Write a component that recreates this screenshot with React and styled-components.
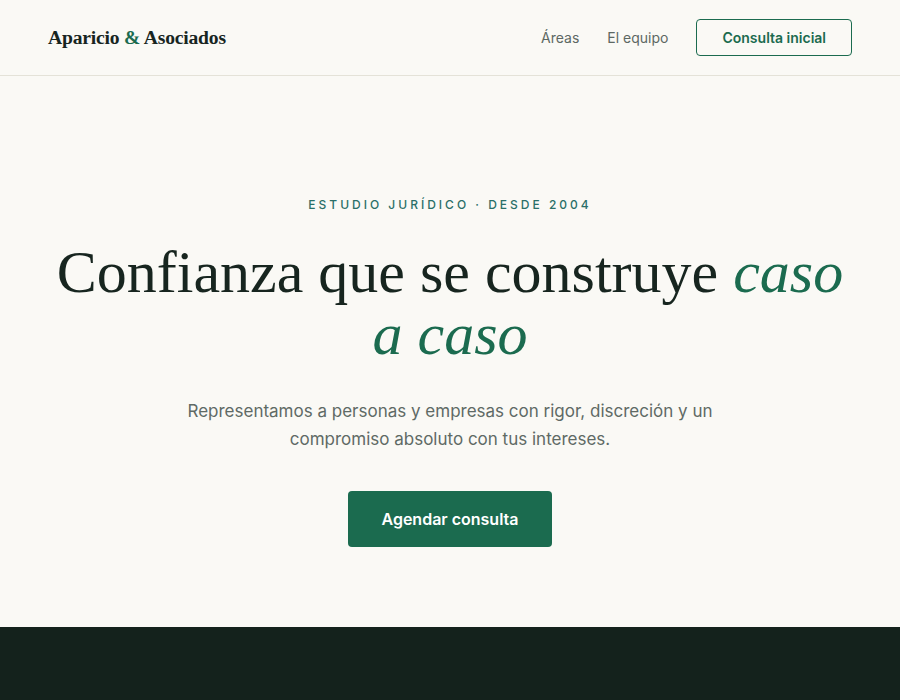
import React from 'react';
import styled, { createGlobalStyle } from 'styled-components';

const GlobalStyle = createGlobalStyle`
  * { box-sizing: border-box; }
  body {
    margin: 0;
    background: #faf9f5;
    font-family: Inter, "Noto Sans", sans-serif;
    color: #16241e;
  }
`;

const Header = styled.header`
  height: 76px;
  padding: 0 48px;
  display: flex;
  align-items: center;
  justify-content: space-between;
  border-bottom: 1px solid #e4e2d8;
  background: #faf9f5;
`;

const Logo = styled.div`
  font-family: "Liberation Serif", "DejaVu Serif", serif;
  font-weight: 700;
  font-size: 19.6px;
  color: #17251f;
  letter-spacing: -0.2px;

  span {
    color: #1b6b4f;
  }
`;

const Nav = styled.nav`
  display: flex;
  align-items: center;
  gap: 28px;
`;

const NavLink = styled.a`
  font-size: 14px;
  color: #5d6863;
  text-decoration: none;
`;

const OutlineButton = styled.a`
  display: inline-flex;
  align-items: center;
  justify-content: center;
  height: 37px;
  padding: 0 25px;
  border: 1px solid #1b6b4f;
  border-radius: 4px;
  color: #1b6b4f;
  font-size: 14px;
  font-weight: 600;
  text-decoration: none;
`;

const Hero = styled.section`
  padding: 121px 48px 80px;
  display: flex;
  flex-direction: column;
  align-items: center;
  text-align: center;
`;

const Eyebrow = styled.p`
  margin: 0;
  font-size: 12px;
  line-height: 16px;
  letter-spacing: 3px;
  color: #2a6f68;
  font-weight: 500;
`;

const Title = styled.h1`
  margin: 28px 0 0;
  max-width: 804px;
  font-family: "Liberation Serif", "DejaVu Serif", serif;
  font-weight: 400;
  font-size: 60px;
  line-height: 62px;
  color: #17251f;

  em {
    color: #1b6b4f;
    font-style: italic;
  }
`;

const Lead = styled.p`
  margin: 32px 0 0;
  max-width: 560px;
  font-size: 17px;
  line-height: 28px;
  color: #5f6a65;
`;

const PrimaryButton = styled.a`
  margin-top: 38px;
  display: inline-flex;
  align-items: center;
  justify-content: center;
  width: 204px;
  height: 56px;
  background: #1b6b4f;
  border-radius: 4px;
  color: #fff;
  font-size: 16px;
  font-weight: 600;
  text-decoration: none;
`;

const Stats = styled.section`
  background: #14221c;
  padding: 64px 48px;
`;

const StatGrid = styled.div`
  display: grid;
  grid-template-columns: repeat(4, 1fr);
  text-align: center;
`;

const StatNumber = styled.div`
  font-family: "Liberation Serif", "DejaVu Serif", serif;
  font-size: 44px;
  color: #8fc7ae;
`;

const StatLabel = styled.div`
  margin-top: 8px;
  font-size: 13px;
  color: #a5b3ac;
`;

const stats = [
  { value: '20+', label: 'Años de experiencia' },
  { value: '1.800', label: 'Casos resueltos' },
  { value: '96%', label: 'Clientes satisfechos' },
  { value: '12', label: 'Abogados' },
];

export default function App() {
  return (
    <>
      <GlobalStyle />
      <Header>
        <Logo>
          Aparicio <span>&amp;</span> Asociados
        </Logo>
        <Nav>
          <NavLink href="#areas">Áreas</NavLink>
          <NavLink href="#equipo">El equipo</NavLink>
          <OutlineButton href="#consulta">Consulta inicial</OutlineButton>
        </Nav>
      </Header>

      <Hero>
        <Eyebrow>ESTUDIO JURÍDICO · DESDE 2004</Eyebrow>
        <Title>
          Confianza que se construye <em>caso a caso</em>
        </Title>
        <Lead>
          Representamos a personas y empresas con rigor, discreción y un
          compromiso absoluto con tus intereses.
        </Lead>
        <PrimaryButton href="#agendar">Agendar consulta</PrimaryButton>
      </Hero>

      <Stats>
        <StatGrid>
          {stats.map((s) => (
            <div key={s.label}>
              <StatNumber>{s.value}</StatNumber>
              <StatLabel>{s.label}</StatLabel>
            </div>
          ))}
        </StatGrid>
      </Stats>
    </>
  );
}
